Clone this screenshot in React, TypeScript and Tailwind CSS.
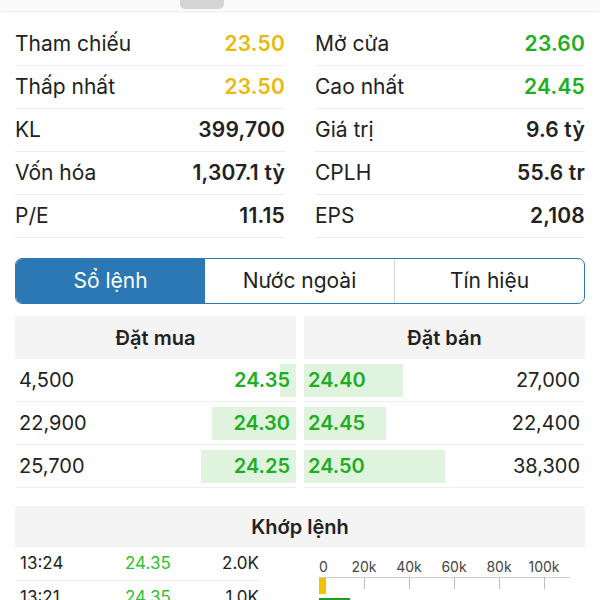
import React from "react";

const stats = [
  { l: "Tham chiếu", v: "23.50", c: "text-[#e9b80c] font-semibold", l2: "Mở cửa", v2: "23.60", c2: "text-[#1fae1f] font-semibold" },
  { l: "Thấp nhất", v: "23.50", c: "text-[#e9b80c] font-semibold", l2: "Cao nhất", v2: "24.45", c2: "text-[#1fae1f] font-semibold" },
  { l: "KL", v: "399,700", c: "text-[#222] font-semibold", l2: "Giá trị", v2: "9.6 tỷ", c2: "text-[#222] font-semibold" },
  { l: "Vốn hóa", v: "1,307.1 tỷ", c: "text-[#222] font-semibold", l2: "CPLH", v2: "55.6 tr", c2: "text-[#222] font-semibold" },
  { l: "P/E", v: "11.15", c: "text-[#222] font-semibold", l2: "EPS", v2: "2,108", c2: "text-[#222] font-semibold" },
];

const buys = [
  { vol: "4,500", price: "24.35", bar: 16 },
  { vol: "22,900", price: "24.30", bar: 84 },
  { vol: "25,700", price: "24.25", bar: 95 },
];

const sells = [
  { vol: "27,000", price: "24.40", bar: 99 },
  { vol: "22,400", price: "24.45", bar: 82 },
  { vol: "38,300", price: "24.50", bar: 141 },
];

const trades = [
  { t: "13:24", p: "24.35", v: "2.0K" },
  { t: "13:21", p: "24.35", v: "1.0K" },
];

function StatRow({ label, value, cls }: { label: string; value: string; cls: string }) {
  return (
    <div className="flex h-[43px] items-center justify-between border-b border-[#ececec]">
      <span className="text-[21px] text-[#222]">{label}</span>
      <span className={`text-[21px] tracking-[0.2px] ${cls}`}>{value}</span>
    </div>
  );
}

export default function App() {
  return (
    <div className="h-[600px] w-[600px] overflow-hidden bg-white font-['Inter','Noto_Sans',sans-serif] text-[#222]">
      {/* cut-off control above */}
      <div className="relative h-[11px] bg-[#fafafa] shadow-[0_1px_2px_rgba(0,0,0,0.08)]">
        <div className="absolute left-[180px] top-0 h-[9px] w-[44px] rounded-b-[5px] bg-[#d4d4d4]" />
      </div>

      {/* stats */}
      <div className="mt-[12px] grid grid-cols-2 gap-x-[30px] px-[15px]">
        <div className="flex flex-col">
          {stats.map((s) => (
            <StatRow key={s.l} label={s.l} value={s.v} cls={s.c} />
          ))}
        </div>
        <div className="flex flex-col">
          {stats.map((s) => (
            <StatRow key={s.l2} label={s.l2} value={s.v2} cls={s.c2} />
          ))}
        </div>
      </div>

      {/* tabs */}
      <div className="mx-[15px] mt-[20px] flex h-[46px] overflow-hidden rounded-[7px] border border-[#2b78b4]">
        <div className="flex flex-1 items-center justify-center bg-[#2b78b4] text-[21px] text-white">Sổ lệnh</div>
        <div className="flex flex-1 items-center justify-center border-r border-[#d6d6d6] text-[21px] text-[#222]">Nước ngoài</div>
        <div className="flex flex-1 items-center justify-center text-[21px] text-[#222]">Tín hiệu</div>
      </div>

      {/* order book */}
      <div className="mx-[15px] mt-[12px] grid grid-cols-2 gap-x-[8px]">
        <div className="flex flex-col">
          <div className="flex h-[43px] items-center justify-center bg-[#f4f4f4] text-[20px] font-semibold">Đặt mua</div>
          {buys.map((b) => (
            <div key={b.vol} className="flex h-[43px] items-center justify-between border-b border-[#efefef] pl-[4px]">
              <span className="text-[20px] text-[#222]">{b.vol}</span>
              <div className="flex h-[33px] items-center justify-end bg-[#dff3df] pr-[6px]" style={{ width: b.bar }}>
                <span className="whitespace-nowrap text-[20px] font-semibold text-[#1fae1f]">{b.price}</span>
              </div>
            </div>
          ))}
        </div>
        <div className="flex flex-col">
          <div className="flex h-[43px] items-center justify-center bg-[#f4f4f4] text-[20px] font-semibold">Đặt bán</div>
          {sells.map((s) => (
            <div key={s.vol} className="flex h-[43px] items-center justify-between border-b border-[#efefef] pr-[5px]">
              <div className="flex h-[33px] items-center bg-[#dff3df] pl-[4px]" style={{ width: s.bar }}>
                <span className="whitespace-nowrap text-[20px] font-semibold text-[#1fae1f]">{s.price}</span>
              </div>
              <span className="text-[20px] text-[#222]">{s.vol}</span>
            </div>
          ))}
        </div>
      </div>

      {/* matched orders */}
      <div className="mx-[15px] mt-[18px] flex h-[41px] items-center justify-center bg-[#f4f4f4] text-[20px] font-semibold">
        Khớp lệnh
      </div>
      <div className="mx-[15px] flex">
        <div className="flex w-[247px] flex-col">
          {trades.map((r) => (
            <div key={r.t} className="grid h-[34px] grid-cols-[105px_80px_54px] items-center border-b border-[#efefef] pl-[5px] text-[17px]">
              <span className="text-[#222]">{r.t}</span>
              <span className="text-[#2fbf2f]">{r.p}</span>
              <span className="text-right text-[#222]">{r.v}</span>
            </div>
          ))}
        </div>
        <div className="ml-[60px] flex-1">
          <svg width="270" height="60" className="block">
            {[0, 20, 40, 60, 80, 100].map((k, i) => (
              <text
                key={k}
                x={i === 0 ? 0 : i * 45}
                y="25"
                textAnchor={i === 0 ? "start" : "middle"}
                fontSize="14"
                fill="#444"
                fontFamily="Inter, sans-serif"
              >
                {k === 0 ? "0" : `${k}k`}
              </text>
            ))}
            <line x1="0" y1="30.5" x2="251" y2="30.5" stroke="#cfcfcf" strokeWidth="1" />
            {[1, 2, 3, 4, 5].map((i) => (
              <line key={i} x1={i * 45 + 0.5} y1="30" x2={i * 45 + 0.5} y2="42" stroke="#bdbdbd" strokeWidth="1" />
            ))}
            <rect x="0" y="31" width="7" height="16" fill="#f2c200" />
            <rect x="0" y="51" width="31" height="10" fill="#1e9e1e" />
          </svg>
        </div>
      </div>
    </div>
  );
}
